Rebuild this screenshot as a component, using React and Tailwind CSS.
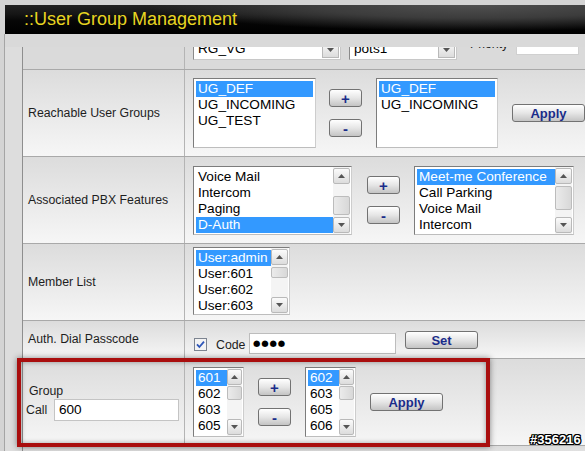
import React from "react";

function Tri({ up }) {
  return (
    <svg width="7" height="4" viewBox="0 0 7 4" className="block">
      <path d={up ? "M0 4L3.5 0L7 4Z" : "M0 0L7 0L3.5 4Z"} fill="#555555" />
    </svg>
  );
}

function SBtn({ up }) {
  return (
    <div className="h-[16px] shrink-0 flex items-center justify-center border border-[#b9b9b9] rounded-[2px] bg-gradient-to-b from-[#fbfbfb] to-[#dcdcdc]">
      <Tri up={up} />
    </div>
  );
}

function Scrollbar({ thumb, sbw }) {
  return (
    <div className={`shrink-0 flex flex-col py-[1px] bg-[#f4f4f4] ${sbw}`}>
      <SBtn up />
      <div className="flex-1">
        <div className={`border border-[#bcbcbc] rounded-[2px] bg-gradient-to-r from-[#ebebeb] to-[#d8d8d8] ${thumb}`} />
      </div>
      <SBtn />
    </div>
  );
}

function ListBox({ size, items, sel, thumb, sbw = "w-[17px]" }) {
  return (
    <div
      className={`shrink-0 flex bg-white border border-t-[#7c7c7c] border-l-[#7c7c7c] border-r-[#cdcdcd] border-b-[#bdbdbd] ${size} ${
        thumb ? "pl-[2px] pr-[1px]" : "px-[2px]"
      }`}
    >
      <div className="flex-1 min-w-0 pt-[2px] overflow-hidden">
        {items.map((t, i) => (
          <div
            key={i}
            className={`h-[16px] leading-[16px] text-[13.6px] pl-[2px] whitespace-nowrap overflow-hidden ${
              i === sel ? "bg-[#3399ff] text-white" : "text-black"
            }`}
          >
            {t}
          </div>
        ))}
      </div>
      {thumb && <Scrollbar thumb={thumb} sbw={sbw} />}
    </div>
  );
}

function Btn({ children, size, text }) {
  return (
    <div
      className={`shrink-0 flex items-center justify-center rounded-[3px] border border-[#727272] bg-gradient-to-b from-[#ffffff] via-[#e6e6e6] to-[#c4c4c4] text-[#1a2c8a] font-bold leading-none ${size} ${text}`}
    >
      {children}
    </div>
  );
}

function PM() {
  return (
    <div className="flex flex-col gap-[12px] shrink-0">
      <Btn size="w-[33px] h-[18px]" text="text-[15px]">+</Btn>
      <Btn size="w-[33px] h-[18px]" text="text-[15px]">-</Btn>
    </div>
  );
}

function Select({ w, value }) {
  return (
    <div className={`shrink-0 h-[20px] flex bg-white border border-[#8a8a8a] border-r-[#c8c8c8] border-b-[#c8c8c8] ${w}`}>
      <div className="flex-1 pl-[4px] pt-[1px] text-[13.6px] leading-[14px] text-black">{value}</div>
      <div className="w-[17px] my-[1px] mr-[1px] border border-[#b9b9b9] bg-gradient-to-b from-[#f8f8f8] to-[#dcdcdc] flex items-center justify-center">
        <Tri />
      </div>
    </div>
  );
}

function Row({ h, label, labelNode, children, col2 = "items-center pl-[8px]" }) {
  return (
    <div className={`flex shrink-0 border-b border-[#a9a9a9] bg-gradient-to-b from-[#dcdcdc] to-[#f6f6f6] ${h}`}>
      <div className="w-[162px] shrink-0 border-r border-[#b4b4b4] flex items-center pl-[5px] text-[12.3px] text-[#1e1e1e]">
        {labelNode || label}
      </div>
      <div className={`flex-1 min-w-0 flex overflow-hidden ${col2}`}>{children}</div>
    </div>
  );
}

export default function App() {
  return (
    <div className="relative w-[585px] h-[451px] overflow-hidden bg-[#d4d4d4] font-['Liberation_Sans',Arial,sans-serif]">
      <div className="h-[5px]" />
      <div className="ml-[5px] h-[29px] flex items-center pl-[19px] text-[18px] text-[#e8d521] bg-[radial-gradient(ellipse_330px_26px_at_470px_0px,#505050_0%,#3c3c3c_50%,rgba(0,0,0,0)_100%),linear-gradient(to_bottom,#222222_0%,#161616_30%,#060606_55%,#000000_100%)]">
        ::User Group Management
      </div>
      <div className="ml-[4px] border-l border-[#a5a5a5] bg-[#dcdcdc] flex flex-col">
        <div className="h-[13px] bg-[#d9d9d9]" />
        <div className="flex">
          <div className="w-[17px] shrink-0 bg-[#dddddd]" />
          <div className="flex-1 min-w-0 border-l border-[#8e8e8e] flex flex-col">
            {/* Row 0 (partially scrolled out of view) */}
            <div className="flex shrink-0 h-[23px] border-b border-[#a9a9a9] bg-[#dadada] overflow-hidden">
              <div className="w-[162px] shrink-0 border-r border-[#b4b4b4]" />
              <div className="flex-1 min-w-0 flex items-start pl-[8px] overflow-hidden">
                <div className="-mt-[7px]">
                  <Select w="w-[148px]" value="RG_VG" />
                </div>
                <div className="-mt-[7px] ml-[8px]">
                  <Select w="w-[108px]" value="pots1" />
                </div>
                <div className="-mt-[10px] ml-[13px] w-[46px] text-[12.3px] leading-[14px] text-[#1e1e1e]">Priority</div>
                <div className="-mt-[12px] w-[63px] h-[20px] bg-white border border-[#d0d0d0]" />
              </div>
            </div>

            {/* Row 1 */}
            <Row h="h-[87px]" label="Reachable User Groups">
              <ListBox size="w-[123px] h-[70px]" items={["UG_DEF", "UG_INCOMING", "UG_TEST"]} sel={0} />
              <div className="ml-[13px]">
                <PM />
              </div>
              <div className="ml-[14px]">
                <ListBox size="w-[122px] h-[70px]" items={["UG_DEF", "UG_INCOMING"]} sel={0} />
              </div>
              <div className="ml-[14px]">
                <Btn size="w-[73px] h-[18px]" text="text-[13px]">Apply</Btn>
              </div>
            </Row>

            {/* Row 2 */}
            <Row h="h-[87px]" label="Associated PBX Features">
              <ListBox
                size="w-[159px] h-[69px]"
                items={["Voice Mail", "Intercom", "Paging", "D-Auth"]}
                sel={3}
                thumb="mt-[12px] h-[19px]"
              />
              <div className="ml-[15px]">
                <PM />
              </div>
              <div className="ml-[14px]">
                <ListBox
                  size="w-[160px] h-[69px]"
                  items={["Meet-me Conference", "Call Parking", "Voice Mail", "Intercom"]}
                  sel={0}
                  thumb="mt-[2px] h-[24px]"
                />
              </div>
            </Row>

            {/* Row 3 */}
            <Row h="h-[77px]" label="Member List" col2="items-start pl-[8px] pt-[3px]">
              <ListBox
                size="w-[97px] h-[68px]"
                items={["User:admin", "User:601", "User:602", "User:603"]}
                sel={0}
                thumb="mt-[2px] h-[11px]"
              />
            </Row>

            {/* Row 4 */}
            <Row h="h-[38px]" label="Auth. Dial Passcode" col2="items-start pl-[9px]">
              <div className="mt-[17px] shrink-0">
                <svg width="13" height="13" viewBox="0 0 13 13" className="block">
                  <rect x="0.5" y="0.5" width="12" height="12" fill="#f3f3f3" stroke="#7d8490" />
                  <path d="M3 6.3L5.4 9L10 3.6" stroke="#2d55b8" strokeWidth="1.8" fill="none" />
                </svg>
              </div>
              <div className="ml-[9px] mt-[16px] w-[33px] shrink-0 leading-[16px] text-[12.3px] text-[#1e1e1e]">Code</div>
              <div className="mt-[12px] w-[147px] h-[21px] shrink-0 bg-white border border-[#bdbdbd] flex items-center pl-[3px]">
                <span className="font-['DejaVu_Sans',sans-serif] text-[8.5px] tracking-[0.8px] text-black leading-none">●●●●</span>
              </div>
              <div className="ml-[9px] mt-[10px]">
                <Btn size="w-[73px] h-[18px]" text="text-[13px]">Set</Btn>
              </div>
            </Row>

            {/* Row 5 */}
            <Row
              h="h-[87px]"
              labelNode={
                <div className="flex flex-col -ml-[5px]">
                  <div className="pl-[6px] leading-[16px]">Group</div>
                  <div className="pl-[3px] flex items-center h-[22px]">
                    <span className="w-[28px] shrink-0">Call</span>
                    <div className="w-[125px] h-[22px] bg-white border border-[#c4c4c4] flex items-center pl-[4px] text-[13.6px] text-black">
                      600
                    </div>
                  </div>
                </div>
              }
            >
              <ListBox
                size="w-[51px] h-[70px]"
                items={["601", "602", "603", "605"]}
                sel={0}
                thumb="mt-[1px] h-[14px]"
                sbw="w-[15px]"
              />
              <div className="ml-[14px]">
                <PM />
              </div>
              <div className="ml-[14px]">
                <ListBox
                  size="w-[51px] h-[70px]"
                  items={["602", "603", "605", "606"]}
                  sel={0}
                  thumb="mt-[1px] h-[14px]"
                  sbw="w-[15px]"
                />
              </div>
              <div className="ml-[14px]">
                <Btn size="w-[73px] h-[18px]" text="text-[13px]">Apply</Btn>
              </div>
            </Row>
            <div className="h-[10px] bg-gradient-to-b from-[#dcdcdc] to-[#e4e4e4]" />
          </div>
        </div>
      </div>

      {/* Red highlight annotation */}
      <div className="absolute left-[17px] top-[358px] w-[473px] h-[89px] border-[4px] border-[#a90e0e] shadow-[0_0_6px_rgba(0,0,0,0.45),inset_0_0_5px_rgba(0,0,0,0.35)]" />

      {/* Watermark */}
      <div className="absolute left-[530px] top-[432px] text-[13px] font-bold leading-[16px] text-white [text-shadow:1px_1px_0_#000,-1px_-1px_0_#000,1px_-1px_0_#000,-1px_1px_0_#000,1px_0_0_#000,-1px_0_0_#000,0_1px_0_#000,0_-1px_0_#000]">
        #356216
      </div>
    </div>
  );
}
